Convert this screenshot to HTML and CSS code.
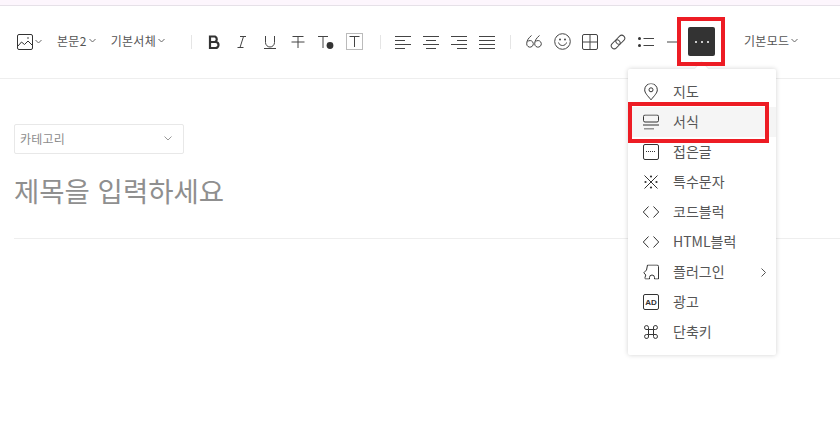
FILE: index.html
```html
<!DOCTYPE html>
<html lang="ko">
<head>
  <meta charset="UTF-8" />
  <title>글쓰기</title>
  <link rel="stylesheet" href="styles.css">
</head>
<body>

  <div class="topline"></div>

  <div class="toolbar">
    <button class="tool tool-image">
      <svg width="16" height="16" viewBox="0 0 16 16" fill="none" stroke="#333" stroke-width="1"><rect x="0.5" y="0.5" width="15" height="15" rx="1.5"/><path d="M1 12l3.500-4 3 2.500L11 7l4 4"/><circle cx="11" cy="4" r=".8" fill="#333" stroke="none"/></svg>
      <svg class="caret" width="7" height="5" viewBox="0 0 7 5"><path d="M.5 1l3 3 3-3" fill="none" stroke="#666"/></svg>
    </button>
    <button class="tool tool-text tool-para">본문2<svg class="caret" width="7" height="5" viewBox="0 0 7 5"><path d="M.5 1l3 3 3-3" fill="none" stroke="#666"/></svg></button>
    <button class="tool tool-text tool-font">기본서체<svg class="caret" width="7" height="5" viewBox="0 0 7 5"><path d="M.5 1l3 3 3-3" fill="none" stroke="#666"/></svg></button>
    <span class="sep sep-first"></span>

    <button class="tool"><svg width="16" height="16" viewBox="0 0 16 16" fill="none" stroke="#333" stroke-width="2.2"><path d="M4 2.500h5a3 3 0 0 1 0 5.500H4zM4 8h5.500a3 3 0 0 1 0 6H4z"/></svg></button>
    <button class="tool"><svg width="16" height="16" viewBox="0 0 16 16" fill="none" stroke="#444"><path d="M6 2.500h6M3.500 13.500h6M9.500 2.500l-3.500 11"/></svg></button>
    <button class="tool"><svg width="16" height="16" viewBox="0 0 16 16" fill="none" stroke="#444"><path d="M3.500 2v6.500a4.500 4.500 0 0 0 9 0V2M2 14.500h12"/></svg></button>
    <button class="tool"><svg width="16" height="16" viewBox="0 0 16 16" fill="none" stroke="#444"><path d="M2.500 2.500h11M1.500 8h13M8 2.500V14"/></svg></button>
    <button class="tool"><svg width="18" height="16" viewBox="0 0 18 16" fill="none" stroke="#444"><path d="M1 2.500h10M6 2.500V14"/><circle cx="13" cy="11.500" r="3.400" fill="#333" stroke="none"/></svg></button>
    <button class="tool"><svg width="17" height="17" viewBox="0 0 17 17" fill="none"><rect x=".5" y=".5" width="16" height="16" stroke="#bbb"/><path d="M3.500 3.500h10M8.500 3.500V14" stroke="#444"/></svg></button>
    <span class="sep sep-style"></span>

    <button class="tool"><svg width="16" height="14" viewBox="0 0 16 14" stroke="#444"><path d="M0 1.500h16M0 5.500h10M0 9.500h16M0 13.500h10"/></svg></button>
    <button class="tool"><svg width="16" height="14" viewBox="0 0 16 14" stroke="#444"><path d="M0 1.500h16M3 5.500h10M0 9.500h16M3 13.500h10"/></svg></button>
    <button class="tool"><svg width="16" height="14" viewBox="0 0 16 14" stroke="#444"><path d="M0 1.500h16M6 5.500h10M0 9.500h16M6 13.500h10"/></svg></button>
    <button class="tool"><svg width="16" height="14" viewBox="0 0 16 14" stroke="#444"><path d="M0 1.500h16M0 5.500h16M0 9.500h16M0 13.500h16"/></svg></button>
    <span class="sep sep-align"></span>

    <button class="tool"><svg width="16" height="13" viewBox="0 0 16 13" fill="none" stroke="#444"><path d="M5.500 .5C2.500 3 .7 5.500 .7 8.800a3.300 3.300 0 1 0 .8-2.100M13.500 .5C10.500 3 8.700 5.500 8.700 8.800a3.300 3.300 0 1 0 .8-2.100"/></svg></button>
    <button class="tool"><svg width="17" height="17" viewBox="0 0 17 17" fill="none" stroke="#444"><circle cx="8.500" cy="8.500" r="7.800"/><path d="M4.500 9.500c1 4 7 4 8 0"/><circle cx="6" cy="6.500" r="1" fill="#444" stroke="none"/><circle cx="11" cy="6.500" r="1" fill="#444" stroke="none"/></svg></button>
    <button class="tool"><svg width="16" height="16" viewBox="0 0 16 16" fill="none" stroke="#444"><rect x=".5" y=".5" width="15" height="15" rx="1.500"/><path d="M8 .5v15M.5 8h15"/></svg></button>
    <button class="tool"><svg width="16" height="16" viewBox="0 0 16 16" fill="none" stroke="#444"><rect x="7.300" y=".7" width="6" height="10" rx="3" transform="rotate(45 10.300 5.700)"/><rect x="2.700" y="5.300" width="6" height="10" rx="3" transform="rotate(45 5.700 10.300)"/></svg></button>
    <button class="tool"><svg width="16" height="10" viewBox="0 0 16 10" fill="none" stroke="#444"><circle cx="1.500" cy="1.500" r="1.500" fill="#333" stroke="none"/><circle cx="1.500" cy="8.500" r="1.500" fill="#333" stroke="none"/><path d="M5.500 1.500H16M5.500 8.500H16"/></svg></button>
    <button class="tool"><svg width="14" height="2" viewBox="0 0 14 2" stroke="#444"><path d="M0 1h14"/></svg></button>
    <button class="tool tool-more"><svg width="14" height="2" viewBox="0 0 14 2" fill="#fff"><circle cx="1" cy="1" r="1"/><circle cx="7" cy="1" r="1"/><circle cx="13" cy="1" r="1"/></svg></button>
    <button class="tool tool-text tool-mode">기본모드<svg class="caret" width="7" height="5" viewBox="0 0 7 5"><path d="M.5 1l3 3 3-3" fill="none" stroke="#666"/></svg></button>
  </div>

  <div class="editor">
    <div class="category">
      <span>카테고리</span>
      <svg width="8" height="5" viewBox="0 0 8 5"><path d="M.5 .5L4 4 7.500 .5" fill="none" stroke="#999"/></svg>
    </div>
    <div class="title">제목을 입력하세요</div>
    <div class="title-line"></div>
  </div>

  <div class="menu">
    <span class="menu-arrow"></span>
    <div class="menu-item">
      <svg width="14" height="17" viewBox="0 0 14 17" fill="none" stroke="#333"><path d="M7 16.300C3.500 12 .7 9.500 .7 6.300a6.300 6.300 0 0 1 12.600 0C13.300 9.500 10.500 12 7 16.300z"/><circle cx="7" cy="6.300" r="2"/></svg>
      <span>지도</span>
    </div>
    <div class="menu-item menu-item-on">
      <svg width="16" height="15" viewBox="0 0 16 15" fill="none" stroke="#333"><rect x=".5" y=".5" width="15" height="7" rx="1.500"/><path d="M0 10.500h16M1 14.500h10"/></svg>
      <span>서식</span>
    </div>
    <div class="menu-item">
      <svg width="16" height="16" viewBox="0 0 16 16" fill="none" stroke="#333"><rect x=".5" y=".5" width="15" height="15" rx="1.500"/><path d="M3 7.500h10" stroke-dasharray="1 1"/></svg>
      <span>접은글</span>
    </div>
    <div class="menu-item">
      <svg width="16" height="16" viewBox="0 0 16 16" fill="none" stroke="#333"><path d="M1.500 1.500l13 13M14.500 1.500l-13 13"/><g fill="#333" stroke="none"><circle cx="8" cy="2.500" r="1.100"/><circle cx="8" cy="13.500" r="1.100"/><circle cx="2.500" cy="8" r="1.100"/><circle cx="13.500" cy="8" r="1.100"/></g></svg>
      <span>특수문자</span>
    </div>
    <div class="menu-item">
      <svg width="17" height="12" viewBox="0 0 17 12" fill="none" stroke="#333"><path d="M6 .5L.8 6 6 11.500M11 .5L16.200 6 11 11.500"/></svg>
      <span>코드블럭</span>
    </div>
    <div class="menu-item">
      <svg width="17" height="12" viewBox="0 0 17 12" fill="none" stroke="#333"><path d="M6 .5L.8 6 6 11.500M11 .5L16.200 6 11 11.500"/></svg>
      <span>HTML블럭</span>
    </div>
    <div class="menu-item">
      <svg width="16" height="15" viewBox="0 0 16 15" fill="none" stroke="#333"><path d="M4.500 .5h9.500a1.500 1.500 0 0 1 1.500 1.500v12.500h-4v-1.500a2.500 2.500 0 0 0-5 0v1.500H3a1 1 0 0 1-1-1.500l.8-2.500-2-2.200 2.700-2.800z"/></svg>
      <span>플러그인</span>
      <svg class="menu-next" width="5" height="9" viewBox="0 0 5 9"><path d="M.5 .5l4 4-4 4" fill="none" stroke="#555"/></svg>
    </div>
    <div class="menu-item">
      <svg width="16" height="16" viewBox="0 0 16 16" fill="none" stroke="#333"><rect x=".5" y=".5" width="15" height="15" rx="1.500"/><text x="8" y="11" text-anchor="middle" class="ad-text">AD</text></svg>
      <span>광고</span>
    </div>
    <div class="menu-item">
      <svg width="14" height="14" viewBox="0 0 14 14" fill="none" stroke="#333"><path d="M4.500 4.500h5v5h-5zM4.500 4.500H3a2 2 0 1 1 1.500-2zM9.500 4.500V3a2 2 0 1 1 2 1.500zM4.500 9.500V11a2 2 0 1 1-2-1.500zM9.500 9.500H11a2 2 0 1 1-1.500 2z"/></svg>
      <span>단축키</span>
    </div>
  </div>

  <!-- 빨간 표시 -->
  <div class="mark mark-more"></div>
  <div class="mark mark-item"></div>

</body>
</html>
```

FILE: styles.css
```css
* { box-sizing: border-box; }
html, body { height: 100%; }
body {
  margin: 0;
  background: #fff;
  color: #333;
  font-family: "Noto Sans CJK KR", "Noto Sans", sans-serif;
  overflow: hidden;
  position: relative;
}
.topline {
  height: 6px;
  background: #fdf6fd;
  border-bottom: 1px solid #e6e1e8;
}
.toolbar {
  height: 73px;
  padding: 0 0 1px 15px;
  border-bottom: 1px solid #eee;
  display: flex;
  align-items: center;
}
.tool {
  width: 28px;
  height: 29px;
  padding: 0;
  border: 0;
  background: none;
  border-radius: 2px;
  font-family: inherit;
  display: flex;
  align-items: center;
  justify-content: center;
  flex-shrink: 0;
}
.tool-image { width: 28px; justify-content: flex-start; padding-left: 2px; gap: 2px; }
.tool-text {
  width: auto;
  padding-bottom: 3px;
  font-size: 12px;
  letter-spacing: 0.3px;
  color: #555;
  gap: 2px;
}
.tool-para { margin-left: 14px; }
.tool-font { margin-left: 15px; }
.tool-mode { margin-left: 29px; }
.tool-more { width: 27px; background: #333; }
.sep {
  width: 1px;
  height: 14px;
  background: #e5e5e5;
  flex-shrink: 0;
}
.sep-first { margin: 0 8px 0 26px; }
.sep-style { margin: 0 8px 0 12px; }
.sep-align { margin: 0 9px; }

.editor { padding: 45px 0 0 14px; }
.category {
  width: 170px;
  height: 30px;
  padding: 0 11px 2px 5px;
  border: 1px solid #e8e8e8;
  border-radius: 2px;
  font-size: 12px;
  letter-spacing: 0.2px;
  color: #8c8c8c;
  display: flex;
  align-items: center;
  justify-content: space-between;
}
.title {
  margin-top: 16px;
  font-size: 27.5px;
  line-height: 40px;
  color: #8f8f8f;
}
.title-line {
  height: 1px;
  margin-top: 28px;
  background: #eee;
}

.menu {
  position: absolute;
  left: 628px;
  top: 69px;
  width: 148px;
  height: 286px;
  padding: 8px 0;
  background: #fff;
  border-radius: 2px;
  box-shadow: 0 0 5px rgba(0,0,0,0.18);
}
.menu-arrow {
  position: absolute;
  left: 69px;
  top: -5px;
  width: 9px;
  height: 9px;
  background: #fff;
  transform: rotate(45deg);
  box-shadow: -1px -1px 1px rgba(0,0,0,0.07);
}
.menu-item {
  height: 30px;
  padding: 0 0 2px 15px;
  position: relative;
  display: flex;
  align-items: center;
  font-size: 14px;
  color: #555;
}
.menu-item > svg:first-child {
  position: absolute;
  left: 23px;
  top: 50%;
  transform: translate(-50%, -50%);
}
.menu-item > span:first-of-type { margin-left: 30px; }
.menu-item-on { background: #f5f5f5; }
.menu-next { position: absolute; right: 10px; top: 11px; }
.ad-text { font: bold 8px "Liberation Sans", sans-serif; fill: #333; stroke: none; }

.mark {
  position: absolute;
  border: 4px solid #ed1c24;
}
.mark-more { left: 677px; top: 17px; width: 48px; height: 49px; }
.mark-item { left: 628px; top: 102px; width: 141px; height: 41px; }
```
